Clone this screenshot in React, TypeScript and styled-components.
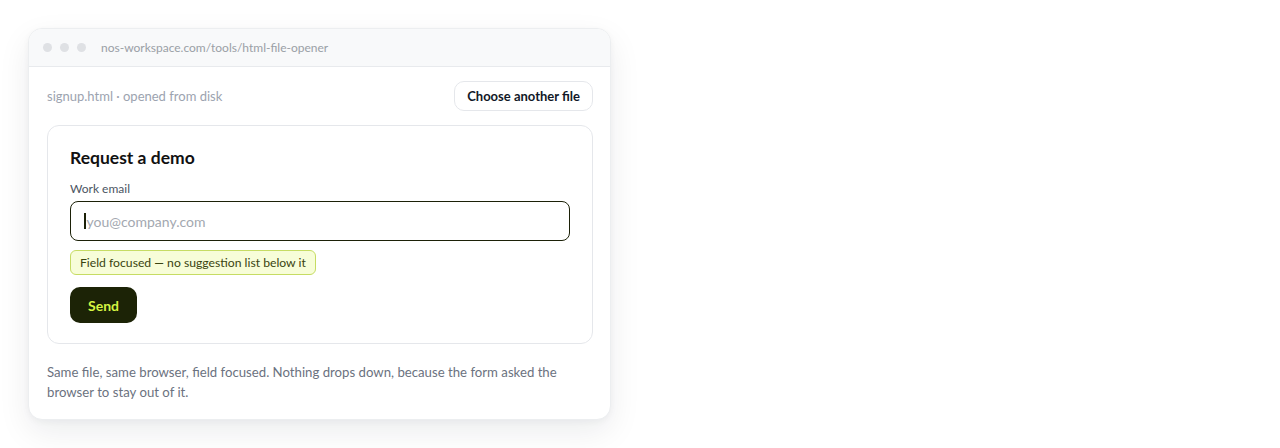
import React from 'react';
import styled, { createGlobalStyle } from 'styled-components';

const GlobalStyle = createGlobalStyle`
  html, body {
    margin: 0;
    padding: 0;
    background: #ffffff;
    font-family: Lato, "Noto Sans", Arial, sans-serif;
    -webkit-font-smoothing: antialiased;
  }
  * { box-sizing: border-box; }
`;

const Page = styled.div`
  padding: 28px;
`;

const BrowserWindow = styled.div`
  width: 583px;
  background: #ffffff;
  border: 1px solid #eceef0;
  border-radius: 14px;
  overflow: hidden;
  box-shadow: 0 12px 32px rgba(15, 23, 42, 0.08), 0 2px 6px rgba(15, 23, 42, 0.04);
`;

const TitleBar = styled.div`
  height: 38px;
  display: flex;
  align-items: center;
  gap: 8px;
  padding: 0 14px;
  background: #f8f9fa;
  border-bottom: 1px solid #e8eaed;
`;

const Dot = styled.span`
  width: 9px;
  height: 9px;
  border-radius: 50%;
  background: #dfe1e4;
`;

const Url = styled.span`
  margin-left: 7px;
  font-size: 12px;
  color: #9aa0a6;
`;

const Body = styled.div`
  padding: 14px 17px 17px 18px;
  display: flex;
  flex-direction: column;
`;

const FileRow = styled.div`
  display: flex;
  align-items: center;
  justify-content: space-between;
  margin-bottom: 14px;
`;

const FileName = styled.span`
  font-size: 13px;
  color: #9ca3af;
`;

const GhostButton = styled.button`
  height: 30px;
  padding: 0 12px;
  font-family: inherit;
  font-size: 13px;
  font-weight: 700;
  color: #111827;
  background: #ffffff;
  border: 1px solid #e5e7eb;
  border-radius: 10px;
`;

const FormCard = styled.div`
  border: 1px solid #e5e7eb;
  border-radius: 12px;
  padding: 21px 22px 20px;
  display: flex;
  flex-direction: column;
`;

const FormTitle = styled.h2`
  margin: 0 0 12px;
  font-size: 17.5px;
  font-weight: 700;
  color: #111111;
  line-height: 22px;
`;

const Label = styled.label`
  font-size: 12px;
  color: #4b5563;
  line-height: 16px;
  margin-bottom: 4px;
`;

const InputBox = styled.div`
  height: 40px;
  display: flex;
  align-items: center;
  padding: 0 13px;
  border: 1px solid #1c2108;
  border-radius: 8px;
  margin-bottom: 9px;
`;

const Caret = styled.span`
  width: 1.5px;
  height: 16px;
  background: #1c2108;
  margin-right: 1px;
`;

const Placeholder = styled.span`
  font-size: 14px;
  color: #a3a8b0;
`;

const Hint = styled.div`
  align-self: flex-start;
  height: 25px;
  display: flex;
  align-items: center;
  padding: 0 9px;
  font-size: 12.2px;
  color: #3a4410;
  background: #f7fdd8;
  border: 1px solid #c6dc63;
  border-radius: 6px;
  margin-bottom: 12px;
`;

const SendButton = styled.button`
  align-self: flex-start;
  height: 36px;
  width: 67px;
  font-family: inherit;
  font-size: 14px;
  font-weight: 700;
  color: #d5f542;
  background: #1c2306;
  border: none;
  border-radius: 10px;
`;

const Note = styled.p`
  margin: 18px 0 0;
  font-size: 13.2px;
  line-height: 20px;
  color: #6b7280;
`;

export default function App() {
  return (
    <>
      <GlobalStyle />
      <Page>
        <BrowserWindow>
          <TitleBar>
            <Dot />
            <Dot />
            <Dot />
            <Url>nos-workspace.com/tools/html-file-opener</Url>
          </TitleBar>
          <Body>
            <FileRow>
              <FileName>signup.html · opened from disk</FileName>
              <GhostButton>Choose another file</GhostButton>
            </FileRow>
            <FormCard>
              <FormTitle>Request a demo</FormTitle>
              <Label>Work email</Label>
              <InputBox>
                <Caret />
                <Placeholder>you@company.com</Placeholder>
              </InputBox>
              <Hint>Field focused — no suggestion list below it</Hint>
              <SendButton>Send</SendButton>
            </FormCard>
            <Note>
              Same file, same browser, field focused. Nothing drops down, because the form asked the browser to stay out of it.
            </Note>
          </Body>
        </BrowserWindow>
      </Page>
    </>
  );
}
